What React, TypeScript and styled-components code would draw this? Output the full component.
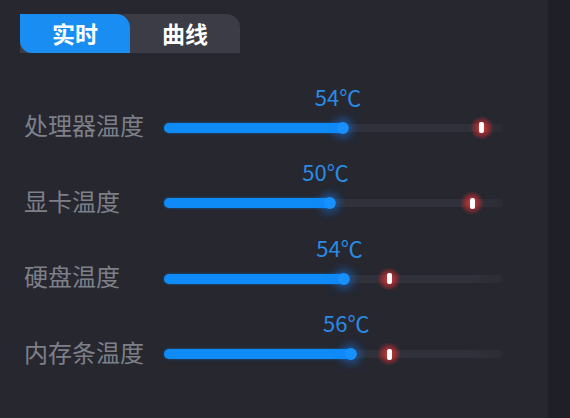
import { FC } from "react";
import styled, { createGlobalStyle } from "styled-components";

const GlobalStyle = createGlobalStyle`
    html, body {
        margin: 0;
        padding: 0;
        background: #26272f;
    }
    #root {
        width: 570px;
        height: 418px;
        overflow: hidden;
    }
`;

type Sensor = {
    label: string
    temp: number
    value: number
    limit: number
}

const sensors: Sensor[] = [
    { label: "处理器温度", temp: 54, value: 53, limit: 93.8 },
    { label: "显卡温度", temp: 50, value: 49.3, limit: 90.9 },
    { label: "硬盘温度", temp: 54, value: 53.4, limit: 66.4 },
    { label: "内存条温度", temp: 56, value: 55.4, limit: 66.4 },
];

const Page = styled.div`
    display: flex;
    width: 570px;
    height: 418px;
    font-family: "Noto Sans CJK SC", "Noto Sans", sans-serif;
`;

const Panel = styled.div`
    width: 548px;
    padding: 14px 0 0 20px;
    box-sizing: border-box;
    background: #26272f;
`;

const SideStrip = styled.div`
    flex: 1;
    background: #1f2027;
`;

const Tabs = styled.div`
    display: flex;
    width: 220px;
    height: 39px;
    background: #3b3c45;
    border-radius: 0 14px 0 0;
`;

type TabProps = {
    active?: boolean
}

const Tab = styled.div<TabProps>`
    flex: 1;
    display: flex;
    align-items: center;
    justify-content: center;
    font-size: 23px;
    font-weight: 700;
    line-height: 1;
    color: #ffffff;
    background: ${props => props.active ? "#1a8df3" : "transparent"};
    border-radius: ${props => props.active ? "0 14px 0 12px" : "0"};
`;

const List = styled.ul`
    list-style: none;
    margin: 37px 0 0;
    padding: 0 0 0 4px;
`;

const Row = styled.li`
    display: flex;
    align-items: center;
    height: 75.5px;
`;

const Label = styled.span`
    width: 140px;
    font-size: 24px;
    line-height: 1;
    margin-top: -5px;
    color: #7e8089;
`;

const Track = styled.div`
    position: relative;
    width: 339px;
    height: 8px;
    border-radius: 4px;
    background: linear-gradient(to right, #30313a 90%, #2b2c34);
`;

const Fill = styled.div`
    position: absolute;
    left: 0;
    top: -1px;
    height: 10px;
    border-radius: 5px;
    background: #0f8bf7;
    box-shadow: 0 0 3px rgba(15, 139, 247, 0.5);
`;

const Knob = styled.div`
    position: absolute;
    top: 50%;
    width: 12px;
    height: 12px;
    border-radius: 50%;
    background: #1791ff;
    transform: translate(-60%, -50%);
    box-shadow: 0 0 8px 4px rgba(20, 130, 255, 0.45);
`;

const Value = styled.span`
    position: absolute;
    bottom: 25px;
    transform: translateX(-62%);
    font-size: 22px;
    line-height: 1;
    color: #2b8be4;
    white-space: nowrap;
`;

const Limit = styled.div`
    position: absolute;
    top: 50%;
    width: 24px;
    height: 24px;
    border-radius: 50%;
    transform: translate(-50%, -50%);
    background: radial-gradient(circle, rgba(225, 60, 60, 0.95) 0%, rgba(190, 45, 50, 0.6) 40%, rgba(150, 40, 45, 0) 70%);
    display: flex;
    align-items: center;
    justify-content: center;
`;

const LimitBar = styled.div`
    width: 5px;
    height: 11px;
    border-radius: 2px;
    background: #ffffff;
`;

const SensorRow: FC<{ sensor: Sensor }> = ({ sensor }) => (
    <Row>
        <Label>{sensor.label}</Label>
        <Track>
            <Fill style={{ width: `${sensor.value}%` }} />
            <Knob style={{ left: `${sensor.value}%` }} />
            <Value style={{ left: `${sensor.value}%` }}>{sensor.temp}℃</Value>
            <Limit style={{ left: `${sensor.limit}%` }}>
                <LimitBar />
            </Limit>
        </Track>
    </Row>
);

const App: FC = () => {
    return (
        <>
            <GlobalStyle />
            <Page>
                <Panel>
                    <Tabs>
                        <Tab active>实时</Tab>
                        <Tab>曲线</Tab>
                    </Tabs>
                    <List>
                        {sensors.map(s => (
                            <SensorRow key={s.label} sensor={s} />
                        ))}
                    </List>
                </Panel>
                <SideStrip />
            </Page>
        </>
    )
}

export default App;
